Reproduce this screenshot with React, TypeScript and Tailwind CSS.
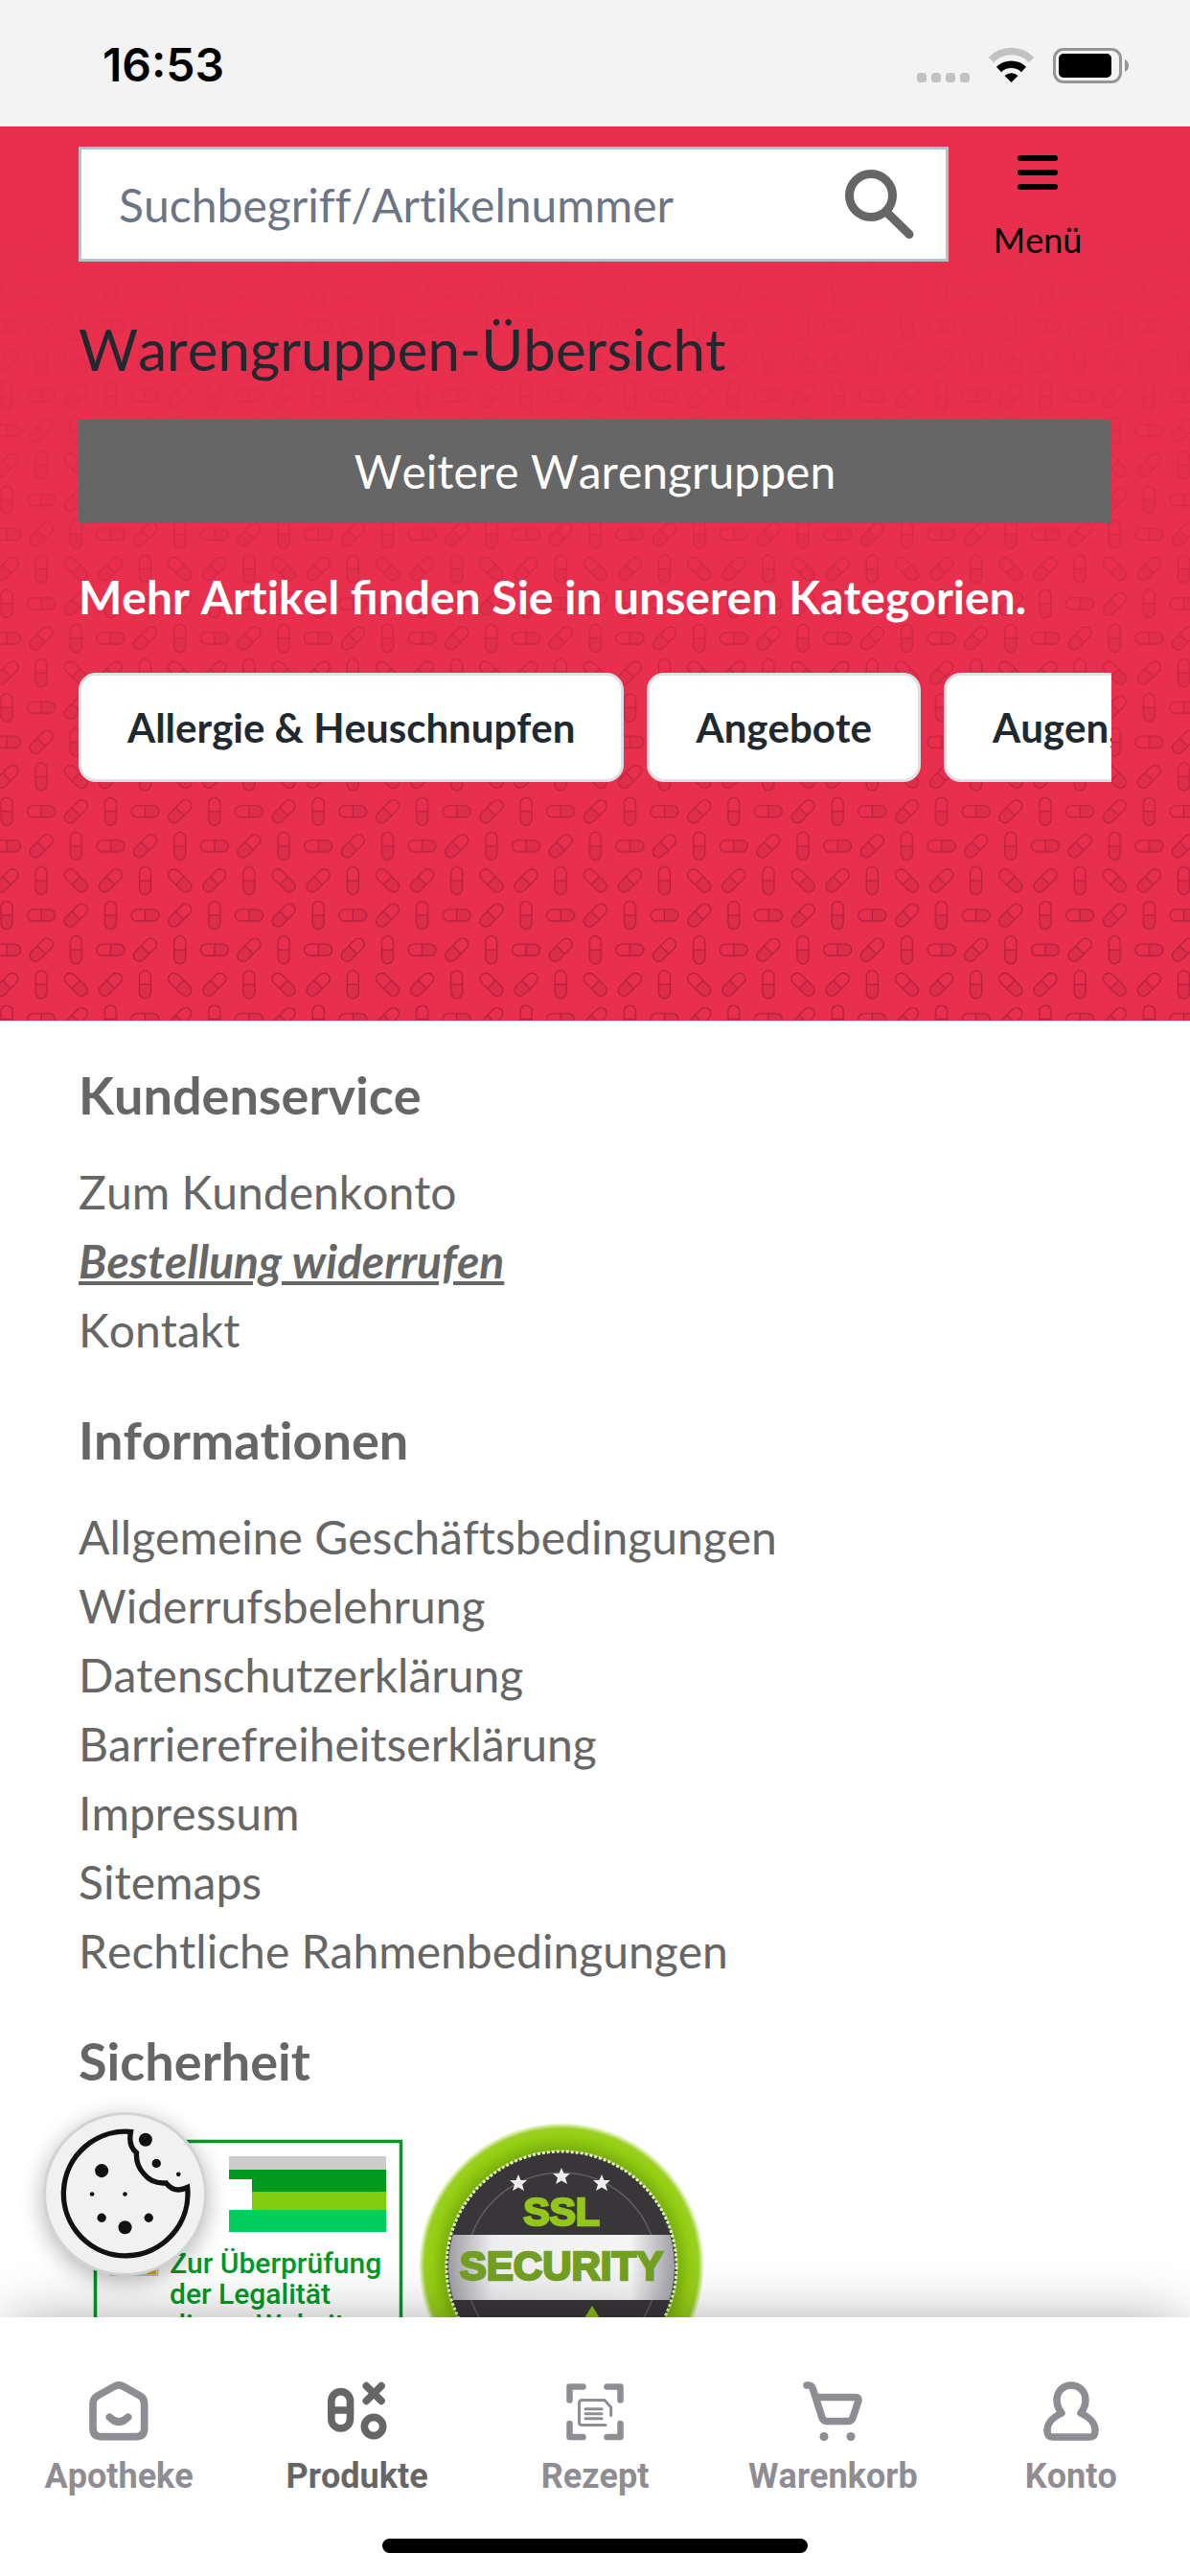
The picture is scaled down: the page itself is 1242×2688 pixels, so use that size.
import React from 'react';

const PillPattern: React.FC = () => (
    <svg className="absolute inset-0 w-full h-full" aria-hidden="true">
        <defs>
            <g id="pill" stroke="#a81e3a" strokeWidth="1.1">
                <path d="M-6 0H6V9A6 6 0 0 1 -6 9Z" fill="#000" fillOpacity="0.05" stroke="none" />
                <rect x="-6" y="-14.5" width="12" height="29" rx="6" fill="none" />
                <path d="M-6 0H6" />
            </g>
            <pattern id="pills" x="-11" y="-26" width="108.4" height="108.4" patternUnits="userSpaceOnUse">
                <use href="#pill" transform="translate(18 18) rotate(-90)" />
                <use href="#pill" transform="translate(54.1 18) rotate(45)" />
                <use href="#pill" transform="translate(90.3 18)" />
                <use href="#pill" transform="translate(18 54.1) rotate(45)" />
                <use href="#pill" transform="translate(54.1 54.1)" />
                <use href="#pill" transform="translate(90.3 54.1) rotate(-45)" />
                <use href="#pill" transform="translate(18 90.3)" />
                <use href="#pill" transform="translate(54.1 90.3) rotate(-90)" />
                <use href="#pill" transform="translate(90.3 90.3) rotate(45)" />
            </pattern>
            <linearGradient id="fade" x1="0" y1="0" x2="0" y2="1">
                <stop offset="0.08" stopColor="#e82f4d" />
                <stop offset="0.3" stopColor="#e82f4d" stopOpacity="0.82" />
                <stop offset="0.9" stopColor="#e82f4d" stopOpacity="0" />
            </linearGradient>
        </defs>
        <rect width="100%" height="100%" fill="url(#pills)" />
        <rect width="100%" height="100%" fill="url(#fade)" />
    </svg>
);

const StatusBar: React.FC = () => (
    <div className="flex h-[132px] shrink-0 items-center justify-between bg-[#f3f3f3] pl-[107px] pr-[63px] pt-1">
        <span className="font-['Inter',sans-serif] text-[48px] font-semibold leading-none text-black">16:53</span>
        <svg width="222" height="38" viewBox="957 48 222 38" aria-hidden="true">
            <g fill="#c2c2c2">
                <rect x="957" y="75" width="10" height="10" rx="3.5" />
                <rect x="972" y="75" width="10" height="10" rx="3.5" />
                <rect x="987" y="75" width="10" height="10" rx="3.5" />
                <rect x="1002" y="75" width="10" height="10" rx="3.5" />
            </g>
            <path d="M1034.500 61.500A29 29 0 0 1 1076.500 61.500" fill="none" stroke="#c2c2c2" strokeWidth="7.500" />
            <path d="M1042.500 71.500A19 19 0 0 1 1068.500 71.500" fill="none" stroke="#000" strokeWidth="7.500" />
            <path d="M1055.500 85L1048.500 78A10 10 0 0 1 1062.500 78Z" fill="#000" />
            <rect x="1100.500" y="50.500" width="69" height="34" rx="9.500" fill="none" stroke="#959595" strokeWidth="3" />
            <rect x="1105" y="55" width="55" height="25" rx="5" fill="#000" />
            <path d="M1174 61Q1178 63 1178 67.500T1174 74Z" fill="#959595" />
        </svg>
    </div>
);

const categories = ['Allergie & Heuschnupfen', 'Angebote', 'Augen, Nase & Ohren'];

const Hero: React.FC = () => (
    <section className="relative bg-[#e82f4d] px-[82px] pt-[21px] pb-[249px]">
        <PillPattern />
        <div className="relative">
            <div className="flex gap-4">
                <form className="flex h-[120px] min-w-0 flex-1 items-center border-[3px] border-[#b4c1ce] bg-white pl-[39px] pr-8">
                    <input
                        type="search"
                        aria-label="Suchbegriff/Artikelnummer"
                        placeholder="Suchbegriff/Artikelnummer"
                        className="h-full min-w-0 flex-1 bg-transparent text-[48px] text-gray-800 outline-none placeholder:text-[#6c7585]"
                    />
                    <button type="button" aria-label="Suchen">
                        <svg width="74" height="74" viewBox="0 0 74 74" fill="none" stroke="#666" strokeWidth="9" strokeLinecap="round">
                            <circle cx="28" cy="28" r="22.500" />
                            <path d="M45 46L68 68.500" />
                        </svg>
                    </button>
                </form>
                <button type="button" className="flex w-[154px] flex-col items-center pt-[9px] text-black">
                    <svg width="42" height="36" viewBox="0 0 42 36" stroke="currentColor" strokeWidth="6" strokeLinecap="round" aria-hidden="true">
                        <path d="M3 3H39M3 18H39M3 33H39" />
                    </svg>
                    <span className="mt-[30px] text-[36px] leading-[44px]">Menü</span>
                </button>
            </div>

            <h1 className="mt-[55px] text-[60px] leading-[72px] text-[#212930]">Warengruppen-Übersicht</h1>
            <button type="button" className="mt-[38px] h-[108px] w-full bg-[#666] text-[48px] text-white">
                Weitere Warengruppen
            </button>
            <p className="mt-[41px] text-[48px] font-bold leading-[72px] text-white">
                Mehr Artikel <span className="[font-variant-ligatures:normal]">finden</span> Sie in unseren Kategorien.
            </p>
            <div className="mt-[43px] flex gap-6 overflow-hidden">
                {categories.map((name) => (
                    <a
                        key={name}
                        href="#"
                        className="flex h-[114px] shrink-0 items-center rounded-[18px] border-[3px] border-[#dbe1e7] bg-white px-12 text-[42px] font-bold text-[#212930]"
                    >
                        {name}
                    </a>
                ))}
            </div>
        </div>
    </section>
);

const serviceLinks = ['Zum Kundenkonto', 'Bestellung widerrufen', 'Kontakt'];
const infoLinks = [
    'Allgemeine Geschäftsbedingungen',
    'Widerrufsbelehrung',
    'Datenschutzerklärung',
    'Barrierefreiheitserklärung',
    'Impressum',
    'Sitemaps',
    'Rechtliche Rahmenbedingungen',
];

const FooterGroup: React.FC<{ title: string; children: React.ReactNode }> = ({ title, children }) => (
    <section>
        <h2 className="mb-[33px] text-[54px] font-bold leading-[64px]">{title}</h2>
        {children}
    </section>
);

const LinkList: React.FC<{ links: string[] }> = ({ links }) => (
    <ul className="text-[48px] leading-[72px]">
        {links.map((link) => (
            <li key={link}>
                <a href="#" className={link === 'Bestellung widerrufen' ? 'font-bold italic underline' : ''}>
                    {link}
                </a>
            </li>
        ))}
    </ul>
);

const LegalityLogo: React.FC = () => (
    <svg width="354" height="300" viewBox="0 0 354 300" className="shrink-0">
        <rect x="17.500" y="18.500" width="319" height="264" fill="#fff" stroke="#009a24" strokeWidth="3.500" />
        <path d="M124 34V113" stroke="#ddd" />
        <path d="M157 34H321V48H157Z" fill="#ccc" />
        <path d="M157 48H321V71H181V58H157Z" fill="#009a20" />
        <path d="M181 71H321V90H181Z" fill="#81cd0d" />
        <path d="M157 90H321V113H157Z" fill="#00ce5e" />
        <rect x="33.500" y="124" width="49" height="34" fill="#fff" stroke="#ccc" strokeWidth="2" />
        <path d="M70 157L81 150V157Z" fill="#e0b000" />
        <g fill="#009a24" fontFamily="Roboto, sans-serif" fontSize="30" fontWeight="500">
            <text x="95" y="156">Zur Überprüfung</text>
            <text x="95" y="188">der Legalität</text>
            <text x="95" y="220">dieser Website</text>
        </g>
    </svg>
);

const star = 'M0 -9L2.500 -3H9L4 1.500L6 8L0 4.500L-6 8L-4 1.500L-9 -3H-2.500Z';

const SslBadge: React.FC = () => (
    <svg width="300" height="300" viewBox="0 0 300 300" className="shrink-0">
        <defs>
            <radialGradient id="ring">
                <stop offset="0.82" stopColor="#7cb310" />
                <stop offset="0.9" stopColor="#93cd10" />
                <stop offset="0.96" stopColor="#9bd024" />
                <stop offset="1" stopColor="#fff" />
            </radialGradient>
            <linearGradient id="band">
                <stop offset="0" stopColor="#99999f" />
                <stop offset="0.2" stopColor="#eeeef0" />
                <stop offset="0.8" stopColor="#f5f5f6" />
                <stop offset="1" stopColor="#9b9ba2" />
            </linearGradient>
            <clipPath id="disc">
                <circle cx="150" cy="149" r="118" />
            </clipPath>
        </defs>
        <circle cx="150" cy="148" r="149" fill="url(#ring)" />
        <circle cx="150" cy="149" r="120" fill="#39363a" stroke="#e5f4c4" strokeWidth="3" strokeDasharray="3 2" />
        <circle cx="150" cy="151" r="100" fill="none" stroke="#615c60" strokeWidth="1.500" />
        <rect x="30" y="116" width="240" height="68" fill="url(#band)" clipPath="url(#disc)" />
        <g fill="#eee">
            <path d={star} transform="translate(105 62)" />
            <path d={star} transform="translate(150 55)" />
            <path d={star} transform="translate(192 62)" />
        </g>
        <g fontFamily="Liberation Sans, Arial, sans-serif" fontWeight="700" textAnchor="middle" strokeWidth="2.500">
            <text x="150" y="106" fontSize="41" fill="#94c51c" stroke="#94c51c">SSL</text>
            <text x="150" y="163" fontSize="42" fill="#73a023" stroke="#73a023">SECURITY</text>
        </g>
        <path d="M182 190L192 206H172Z" fill="#8abf1c" />
    </svg>
);

const CookieButton: React.FC = () => (
    <button
        type="button"
        aria-label="Cookie-Einstellungen"
        className="absolute bottom-[43px] left-[45px] h-[171px] w-[171px] rounded-full border-[3px] border-[#d3d3d3] bg-[#f1f1f1] shadow-[0_6px_24px_rgba(0,0,0,0.3)]"
    >
        <svg viewBox="144 324 494 494" className="h-full w-full">
            <path
                d="M417 377A194 194 0 1 0 586 550Q545 570 519 536Q475 540 450 508Q424 480 427 442Q400 420 409 377"
                fill="none"
                stroke="#111"
                strokeWidth="16"
            />
            <g fill="#111">
                <circle cx="455" cy="401" r="21" />
                <circle cx="318" cy="498" r="21" />
                <circle cx="391" cy="675" r="21" />
                <circle cx="489" cy="475" r="14" />
                <circle cx="318" cy="645" r="14" />
                <circle cx="465" cy="645" r="14" />
                <circle cx="558" cy="509" r="7" />
                <circle cx="288" cy="571" r="7" />
                <circle cx="391" cy="571" r="7" />
            </g>
        </svg>
    </button>
);

const navItems = [
    {
        label: 'Apotheke',
        icon: (
            <svg width="62" height="62" viewBox="280 256 186 186" strokeWidth="23">
                <path d="M292 327Q292 309 306 301L360 271Q373 264 386 271L440 301Q453 309 453 327V403Q453 429 427 429H318Q292 429 292 403Z" />
                <path d="M344 368Q373 397 402 368" />
            </svg>
        ),
    },
    {
        label: 'Produkte',
        icon: (
            <svg width="62" height="62" viewBox="1024 256 186 186" strokeWidth="23">
                <rect x="1035.500" y="288" width="59" height="115" rx="29.500" />
                <path d="M1036 346H1094M1145 270L1192 317M1192 270L1145 317" />
                <circle cx="1168" cy="397" r="29" />
            </svg>
        ),
    },
    {
        label: 'Rezept',
        icon: (
            <svg width="62" height="62" viewBox="0 0 62 62" strokeWidth="6.500">
                <path d="M18.500 5.500H4.500V19.500M43.500 5.500H57.500V19.500M4.500 44V58H18.500M57.500 44V58H43.500" />
                <path d="M42 45.500H17.500Q14.500 45.500 14.500 42.500V22.500Q14.500 19.500 17.500 19.500H41L47.700 27V35.500M21 28.700H38M21 33.700H38M21 38.700H38" strokeWidth="3" />
            </svg>
        ),
    },
    {
        label: 'Warenkorb',
        icon: (
            <svg width="62" height="62" viewBox="0 0 62 62" strokeWidth="7.500">
                <path d="M4 4H6Q9 4 10.500 8L20 38Q21.500 41.500 25 41.500H47Q50.500 41.500 52 38L58 20Q58.500 16.500 55 16.500H14" />
                <circle cx="22" cy="57.500" r="4.500" fill="currentColor" stroke="none" />
                <circle cx="50" cy="57.500" r="4.500" fill="currentColor" stroke="none" />
            </svg>
        ),
    },
    {
        label: 'Konto',
        icon: (
            <svg width="62" height="62" viewBox="0 0 62 62" strokeWidth="7.500">
                <path d="M31 4C40 4 46 11 46 19.500C46 25 44 29 41 33C51 38 56 43 56 51C56 56 54 58 50 58H12C8 58 6 56 6 51C6 43 11 38 21 33C18 29 16 25 16 19.500C16 11 22 4 31 4Z" />
            </svg>
        ),
    },
];

const BottomNav: React.FC = () => (
    <nav className="relative shrink-0 bg-white pt-[67px] pb-6 shadow-[0_0_60px_-10px_rgba(0,0,0,0.42)]">
        <div className="grid grid-cols-5">
            {navItems.map(({ label, icon }) => (
                <a
                    key={label}
                    href="#"
                    className={`flex flex-col items-center fill-none stroke-current [stroke-linecap:round] [stroke-linejoin:round] ${
                        label === 'Produkte' ? 'text-[#666]' : 'text-[#8e8d93]'
                    }`}
                >
                    {icon}
                    <span className="mt-[17px] stroke-none font-['Roboto',sans-serif] text-[36px] font-bold leading-10">{label}</span>
                </a>
            ))}
        </div>
        <div className="mx-auto mt-[45px] h-[15px] w-[444px] rounded-full bg-black"></div>
    </nav>
);

const App: React.FC = () => {
    return (
        <div className="flex h-screen flex-col overflow-hidden bg-white font-['Lato',sans-serif] [font-variant-ligatures:no-common-ligatures] [font-kerning:none]">
            <StatusBar />
            <div className="relative min-h-0 flex-1">
                <main className="h-full overflow-y-auto [scrollbar-width:none]">
                    <Hero />
                    <footer className="flex flex-col gap-[47px] px-[82px] pt-[46px] text-[#666]">
                        <FooterGroup title="Kundenservice">
                            <LinkList links={serviceLinks} />
                        </FooterGroup>
                        <FooterGroup title="Informationen">
                            <LinkList links={infoLinks} />
                        </FooterGroup>
                        <FooterGroup title="Sicherheit">
                            <div className="flex">
                                <LegalityLogo />
                                <SslBadge />
                            </div>
                        </FooterGroup>
                    </footer>
                </main>
                <CookieButton />
            </div>
            <BottomNav />
        </div>
    );
};

export default App;
